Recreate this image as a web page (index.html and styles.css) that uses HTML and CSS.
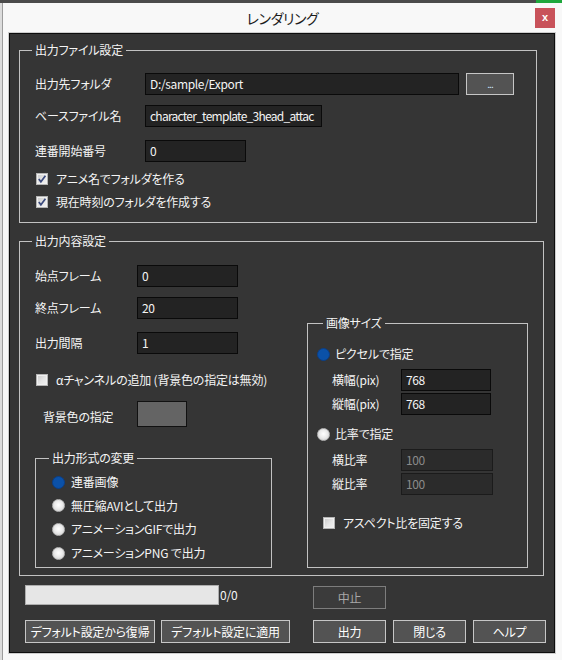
FILE: index.html
```html
<!DOCTYPE html>
<html lang="ja">
<head>
<meta charset="utf-8">
<title>レンダリング</title>
<link rel="stylesheet" href="styles.css">
</head>
<body>
<div class="desk-top"><span class="desk-green"></span></div>
<div class="desk">
  <div class="desk-left"></div>
  <div class="window">
    <div class="titlebar">
      <span class="title">レンダリング</span>
      <span class="close">x</span>
    </div>
    <div class="panel">
      <fieldset class="group g1">
        <legend>出力ファイル設定</legend>
        <div class="g1-body">
          <div class="row r1">
            <span class="label lw1">出力先フォルダ</span>
            <div class="field w-folder">D:/sample/Export</div>
            <div class="btn browse">...</div>
          </div>
          <div class="row r2">
            <span class="label lw1">ベースファイル名</span>
            <div class="field w-base">character_template_3head_attac</div>
          </div>
          <div class="row r3">
            <span class="label lw1">連番開始番号</span>
            <div class="field w-start">0</div>
          </div>
          <div class="check-row c1">
            <span class="cb"><svg width="10" height="10" viewBox="0 0 10 10"><polyline points="1.8,5 3.9,7.8 8.4,1.8" fill="none" stroke="#3b4a7d" stroke-width="1.7"/></svg></span>
            <span>アニメ名でフォルダを作る</span>
          </div>
          <div class="check-row c2">
            <span class="cb"><svg width="10" height="10" viewBox="0 0 10 10"><polyline points="1.8,5 3.9,7.8 8.4,1.8" fill="none" stroke="#3b4a7d" stroke-width="1.7"/></svg></span>
            <span>現在時刻のフォルダを作成する</span>
          </div>
        </div>
      </fieldset>

      <fieldset class="group g2">
        <legend>出力内容設定</legend>
        <div class="g2-body">
          <div class="col-left">
            <div class="row s1">
              <span class="label lw2">始点フレーム</span>
              <div class="field w-frame">0</div>
            </div>
            <div class="row s2">
              <span class="label lw2">終点フレーム</span>
              <div class="field w-frame">20</div>
            </div>
            <div class="row s3">
              <span class="label lw2">出力間隔</span>
              <div class="field w-frame">1</div>
            </div>
            <div class="check-row c3">
              <span class="cb"></span>
              <span>αチャンネルの追加 (背景色の指定は無効)</span>
            </div>
            <div class="bg-row">
              <span class="label bg-label">背景色の指定</span>
              <div class="swatch"></div>
            </div>
            <fieldset class="group fmt">
              <legend>出力形式の変更</legend>
              <div class="fmt-body">
                <div class="radio-row"><span class="radio on"></span><span>連番画像</span></div>
                <div class="radio-row"><span class="radio"></span><span>無圧縮AVIとして出力</span></div>
                <div class="radio-row"><span class="radio"></span><span>アニメーションGIFで出力</span></div>
                <div class="radio-row"><span class="radio"></span><span>アニメーションPNG で出力</span></div>
              </div>
            </fieldset>
          </div>
          <div class="col-right">
            <fieldset class="group size">
              <legend>画像サイズ</legend>
              <div class="size-body">
                <div class="radio-row p1"><span class="radio on"></span><span>ピクセルで指定</span></div>
                <div class="row z1">
                  <span class="label lw3">横幅(pix)</span>
                  <div class="field w-pix">768</div>
                </div>
                <div class="row z2">
                  <span class="label lw3">縦幅(pix)</span>
                  <div class="field w-pix">768</div>
                </div>
                <div class="radio-row p2"><span class="radio"></span><span>比率で指定</span></div>
                <div class="row z3">
                  <span class="label lw3">横比率</span>
                  <div class="field w-ratio disabled">100</div>
                </div>
                <div class="row z4">
                  <span class="label lw3">縦比率</span>
                  <div class="field w-ratio disabled">100</div>
                </div>
                <div class="check-row c4">
                  <span class="cb"></span>
                  <span>アスペクト比を固定する</span>
                </div>
              </div>
            </fieldset>
          </div>
        </div>
      </fieldset>

      <div class="bottom">
        <div class="prog-row">
          <div class="progress"></div>
          <span class="count">0/0</span>
          <div class="btn stop">中止</div>
        </div>
        <div class="btn-row">
          <div class="btn b-wide1">デフォルト設定から復帰</div>
          <div class="btn b-wide2">デフォルト設定に適用</div>
          <div class="btn b-out">出力</div>
          <div class="btn b-close">閉じる</div>
          <div class="btn b-help">ヘルプ</div>
        </div>
      </div>
    </div>
  </div>
</div>
</body>
</html>
```
FILE: styles.css
```css
* { box-sizing: border-box; }
html, body { margin: 0; padding: 0; }
body {
  width: 562px;
  height: 660px;
  overflow: hidden;
  background: #f4f4f4;
  font-family: "Noto Sans CJK JP", "Noto Sans", sans-serif;
  font-size: 12px;
  line-height: 16px;
  font-feature-settings: "palt";
  letter-spacing: -0.2px;
  color: #f4f4f4;
}

.desk-top {
  height: 3px;
  background: #4b4b4b;
  display: flex;
  justify-content: flex-end;
}
.desk-green { width: 26px; background: #1ea73c; }

.desk { display: flex; height: 657px; }
.desk-left {
  width: 3px;
  flex: none;
  background: #dcdcdc;
  border-right: 1px solid #9c9c9c;
}

.window {
  flex: 1;
  background: #f8f8f8;
  display: flex;
  flex-direction: column;
}

.titlebar {
  height: 29px;
  flex: none;
  display: grid;
  grid-template-columns: 1fr auto 1fr;
  align-items: center;
}
.title {
  grid-column: 2;
  font-size: 14px;
  line-height: 18px;
  color: #1c1c1c;
  letter-spacing: -0.4px;
}
.close {
  grid-column: 3;
  justify-self: end;
  margin-right: 7px;
  width: 20px;
  height: 20px;
  background: #c8525a;
  color: #fff;
  font-family: "Liberation Sans", sans-serif;
  font-weight: bold;
  font-size: 11px;
  line-height: 18px;
  letter-spacing: 0;
  text-align: center;
}

.panel {
  margin-left: 5px;
  width: 548px;
  height: 622px;
  flex: none;
  background: #353535;
  border: 1px solid #cdcdcd;
  box-shadow: inset 0 0 0 1px #0d0d0d;
  padding: 0;
}

.group {
  border: 1px solid #c2c2c2;
  padding: 0;
  margin: 0;
  min-width: 0;
}
.group > legend {
  padding: 0 3px;
  font-size: 12px;
  line-height: 16px;
  color: #f4f4f4;
}

.g1 { margin: 9px 0 0 10px; width: 518px; height: 181px; }
.g1 > legend { margin-left: 12px; }
.g1-body { padding-left: 15px; }

.row { display: flex; align-items: center; height: 22px; }
.label { flex: none; white-space: nowrap; }
.lw1 { width: 110px; }
.lw2 { width: 102px; }
.lw3 { width: 69px; }

.r1 { margin-top: 15px; }
.r2 { margin-top: 10px; }
.r3 { margin-top: 13px; }

.field {
  flex: none;
  height: 22px;
  background: #232323;
  border: 1px solid #0a0a0a;
  padding: 0 4px;
  line-height: 20px;
  white-space: nowrap;
  overflow: hidden;
  color: #f4f4f4;
  letter-spacing: -0.35px;
}
.field.disabled {
  background: #2b2b2b;
  border-color: #1b1b1b;
  color: #8a8a8a;
}
.w-folder { width: 314px; }
.w-base { width: 177px; padding-right: 0; letter-spacing: -0.75px; }
.w-start { width: 101px; }
.w-frame { width: 101px; }
.w-pix { width: 90px; }
.w-ratio { width: 92px; }

.btn {
  flex: none;
  height: 23px;
  background: #535353;
  border: 1px solid #c6c6c6;
  color: #ffffff;
  display: flex;
  align-items: center;
  justify-content: center;
  white-space: nowrap;
}
.browse {
  width: 48px;
  height: 22px;
  margin-left: 7px;
  color: #cfe6ff;
  font-size: 10px;
  letter-spacing: -1px;
}

.check-row {
  display: flex;
  align-items: center;
  height: 16px;
  gap: 8px;
  padding-left: 1px;
  white-space: nowrap;
}
.cb {
  flex: none;
  width: 12px;
  height: 12px;
  border: 1px solid #b4b4b4;
  background: linear-gradient(135deg, #c9c9c9 0%, #e6e6e6 55%, #f2f2f2 100%);
  box-shadow: inset 0 0 0 1px #f0f0f0;
  display: flex;
  align-items: center;
  justify-content: center;
}
.cb svg { display: block; }
.c1 { margin-top: 9px; }
.c2 { margin-top: 7px; }

.g2 { margin: 10px 0 0 10px; width: 525px; height: 343px; }
.g2 > legend { margin-left: 12px; }
.g2-body { display: grid; grid-template-columns: 287px 221px; }
.col-left { padding-left: 15px; }

.s1 { margin-top: 16px; }
.s2 { margin-top: 10px; }
.s3 { margin-top: 13px; }
.c3 { margin-top: 18px; }

.bg-row { display: flex; align-items: flex-start; margin-top: 13px; }
.bg-label { width: 102px; padding-left: 8px; padding-top: 8px; }
.swatch {
  flex: none;
  width: 50px;
  height: 26px;
  background: #646464;
  border: 1px solid #111111;
}

.fmt { margin-top: 23px; width: 237px; height: 118px; }
.fmt > legend { margin-left: 13px; }
.fmt-body {
  padding: 8px 0 0 16px;
  display: flex;
  flex-direction: column;
  gap: 7.7px;
}

.radio-row {
  display: flex;
  align-items: center;
  height: 16px;
  gap: 6px;
  white-space: nowrap;
}
.radio {
  flex: none;
  width: 13px;
  height: 13px;
  border-radius: 50%;
  border: 1px solid #b9b9b9;
  background: radial-gradient(circle at 50% 45%, #ffffff 0%, #ececec 45%, #c9c9c9 100%);
}
.radio.on {
  border-color: #0a3f88;
  background: #0b51a8;
}

.size { margin-top: 66px; width: 221px; height: 253px; }
.size > legend { margin-left: 15px; }
.size-body { display: flex; flex-direction: column; }
.p1 { margin-top: 15px; padding-left: 9px; gap: 5px; }
.p2 { margin-top: 11px; padding-left: 9px; gap: 5px; }
.z1 { margin-top: 7px; padding-left: 24px; }
.z2 { margin-top: 2px; padding-left: 24px; }
.z3 { margin-top: 7px; padding-left: 24px; }
.z4 { margin-top: 2px; padding-left: 24px; }
.c4 { margin-top: 20px; padding-left: 15px; gap: 8px; }

.bottom { padding-left: 16px; }
.prog-row { display: flex; align-items: flex-start; margin-top: 9px; }
.progress {
  flex: none;
  width: 194px;
  height: 20px;
  background: #e6e6e6;
  border: 1px solid #adadad;
}
.count {
  flex: none;
  width: 94px;
  line-height: 20px;
  padding-left: 1px;
}
.stop {
  width: 73px;
  margin-top: 1px;
  background: #3b3b3b;
  border-color: #7d7d7d;
  color: #a8a8a8;
}
.btn-row { display: flex; margin-top: 11px; }
.b-wide1 { width: 130px; }
.b-wide2 { width: 129px; margin-left: 6px; }
.b-out { width: 73px; margin-left: 23px; }
.b-close { width: 73px; margin-left: 7px; }
.b-help { width: 73px; margin-left: 7px; }
```
